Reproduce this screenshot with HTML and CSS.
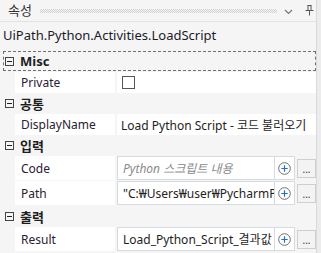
FILE: index.html
```html
<!DOCTYPE html>
<html>
<head>
<meta charset="utf-8">
<link rel="stylesheet" href="styles.css">
</head>
<body>
<div class="panel">
  <div class="main">
    <div class="header">
      <span class="header-title">속성</span>
      <span class="grip"></span>
      <svg class="chev" width="9" height="6" viewBox="0 0 9 6"><path d="M1 1 L4.5 4.5 L8 1" fill="none" stroke="#777" stroke-width="1.2"/></svg>
      <svg class="pin" width="9" height="11" viewBox="0 0 9 11"><path d="M2.5 0.5 H6.5 M3 0.5 V5.5 M6 0.5 V5.5 M0.5 5.5 H8.5 M4.5 5.5 V10.5" fill="none" stroke="#555" stroke-width="1"/></svg>
    </div>
    <div class="title">UiPath.Python.Activities.LoadScript</div>
    <div class="grid">
      <div class="cat cat-focus"><span class="tog"></span><span class="cat-label">Misc</span></div>
      <div class="prop"><div class="pname">Private</div><div class="pval"><span class="check"></span></div></div>
      <div class="cat"><span class="tog"></span><span class="cat-label">공통</span></div>
      <div class="prop"><div class="pname">DisplayName</div><div class="pval ptext">Load Python Script - 코드 불러오기</div></div>
      <div class="cat"><span class="tog"></span><span class="cat-label">입력</span></div>
      <div class="prop prop-ed"><div class="pname">Code</div><div class="pval editor"><div class="inbox placeholder">Python 스크립트 내용</div><div class="plus"><svg width="13" height="13" viewBox="0 0 13 13"><circle cx="6.5" cy="6.5" r="5.8" fill="none" stroke="#6d6d6d" stroke-width="1"/><path d="M6.5 3.3 V9.7 M3.3 6.5 H9.7" stroke="#1c6fd1" stroke-width="1.2"/></svg></div><div class="dots">...</div></div></div>
      <div class="prop prop-ed"><div class="pname">Path</div><div class="pval editor"><div class="inbox">"C:₩Users₩user₩PycharmP</div><div class="plus"><svg width="13" height="13" viewBox="0 0 13 13"><circle cx="6.5" cy="6.5" r="5.8" fill="none" stroke="#6d6d6d" stroke-width="1"/><path d="M6.5 3.3 V9.7 M3.3 6.5 H9.7" stroke="#1c6fd1" stroke-width="1.2"/></svg></div><div class="dots">...</div></div></div>
      <div class="cat"><span class="tog"></span><span class="cat-label">출력</span></div>
      <div class="prop prop-ed"><div class="pname">Result</div><div class="pval editor"><div class="inbox">Load_Python_Script_결과값</div><div class="plus"><svg width="13" height="13" viewBox="0 0 13 13"><circle cx="6.5" cy="6.5" r="5.8" fill="none" stroke="#6d6d6d" stroke-width="1"/><path d="M6.5 3.3 V9.7 M3.3 6.5 H9.7" stroke="#1c6fd1" stroke-width="1.2"/></svg></div><div class="dots">...</div></div></div>
    </div>
  </div>
  <div class="scroll"></div>
</div>
</body>
</html>
```
FILE: styles.css
```css
html, body { margin: 0; padding: 0; }
body {
  width: 321px; height: 253px; overflow: hidden;
  background: #f5f5f5;
  font-family: "Noto Sans", "Noto Sans CJK KR", sans-serif;
  font-size: 12px; color: #1e1e1e;
}
.panel { display: flex; width: 321px; height: 253px; }
.main { width: 316px; display: flex; flex-direction: column; }
.scroll { width: 4px; background: #ececec; border-left: 1px solid #dadada; }
.header {
  height: 21px; display: flex; align-items: center;
  border-bottom: 1px solid #e2e2e2; padding-left: 8px;
}
.header-title { font-size: 13px; color: #333; width: 32px; line-height: 1; }
.grip {
  width: 237px; height: 4px; margin-top: 1px;
  background-image: conic-gradient(#cfcfcf 25%, transparent 0 50%, #cfcfcf 0 75%, transparent 0);
  background-size: 2px 2px;
}
.chev { margin-left: 7px; margin-top: 2px; }
.pin { margin-left: 12px; margin-top: -1px; }
.title {
  height: 28px; line-height: 26px; padding-left: 3px;
  font-size: 13px; color: #1b1b2b;
}
.grid { display: flex; flex-direction: column; }
.cat {
  height: 21px; display: flex; align-items: center; padding-left: 5px;
  box-sizing: border-box;
}
.cat-focus { margin: 1px 0 1px 3px; height: 20px; padding-left: 1px; border: 1px dashed #707070; }
.tog {
  width: 9px; height: 9px; box-sizing: border-box; border: 1px solid #444;
  position: relative; margin-right: 6px;
}
.tog::after {
  content: ""; position: absolute; left: 1px; right: 1px; top: 3px; height: 1px; background: #222;
}
.cat-label { font-weight: bold; font-size: 13px; color: #1e1e1e; }
.prop {
  display: flex; margin-left: 15px; height: 21px; gap: 2px;
}
.prop-ed { height: 24px; margin-bottom: 1px; }
.pname {
  width: 100px; flex-shrink: 0; background: #fff; padding-left: 6px; box-sizing: border-box;
  display: flex; align-items: center; color: #2a2033;
}
.pval { flex: 1; min-width: 0; background: #fff; display: flex; align-items: center; }
.ptext { padding-left: 4px; white-space: nowrap; overflow: hidden; }
.check { width: 13px; height: 13px; box-sizing: border-box; border: 1px solid #555; margin-left: 5px; }
.editor { background: #f5f5f5; }
.inbox {
  width: 158px; flex-shrink: 0; height: 100%; box-sizing: border-box; background: #fff;
  border: 1px solid #d5dbe1; padding-left: 5px; display: flex; align-items: center;
  white-space: nowrap; overflow: hidden;
}
.placeholder { font-style: italic; color: #8a8a8a; }
.plus {
  width: 20px; flex-shrink: 0; height: 100%; box-sizing: border-box; background: #fff;
  border: 1px solid #d5dbe1; border-left: none;
  display: flex; align-items: center; justify-content: center;
}
.dots {
  width: 19px; flex-shrink: 0; height: 19px; margin-left: 2px; box-sizing: border-box;
  border: 1px solid #cfcfcf; background: #f3f3f3;
  font-size: 10px; line-height: 19px; text-align: center; color: #333;
}
```
